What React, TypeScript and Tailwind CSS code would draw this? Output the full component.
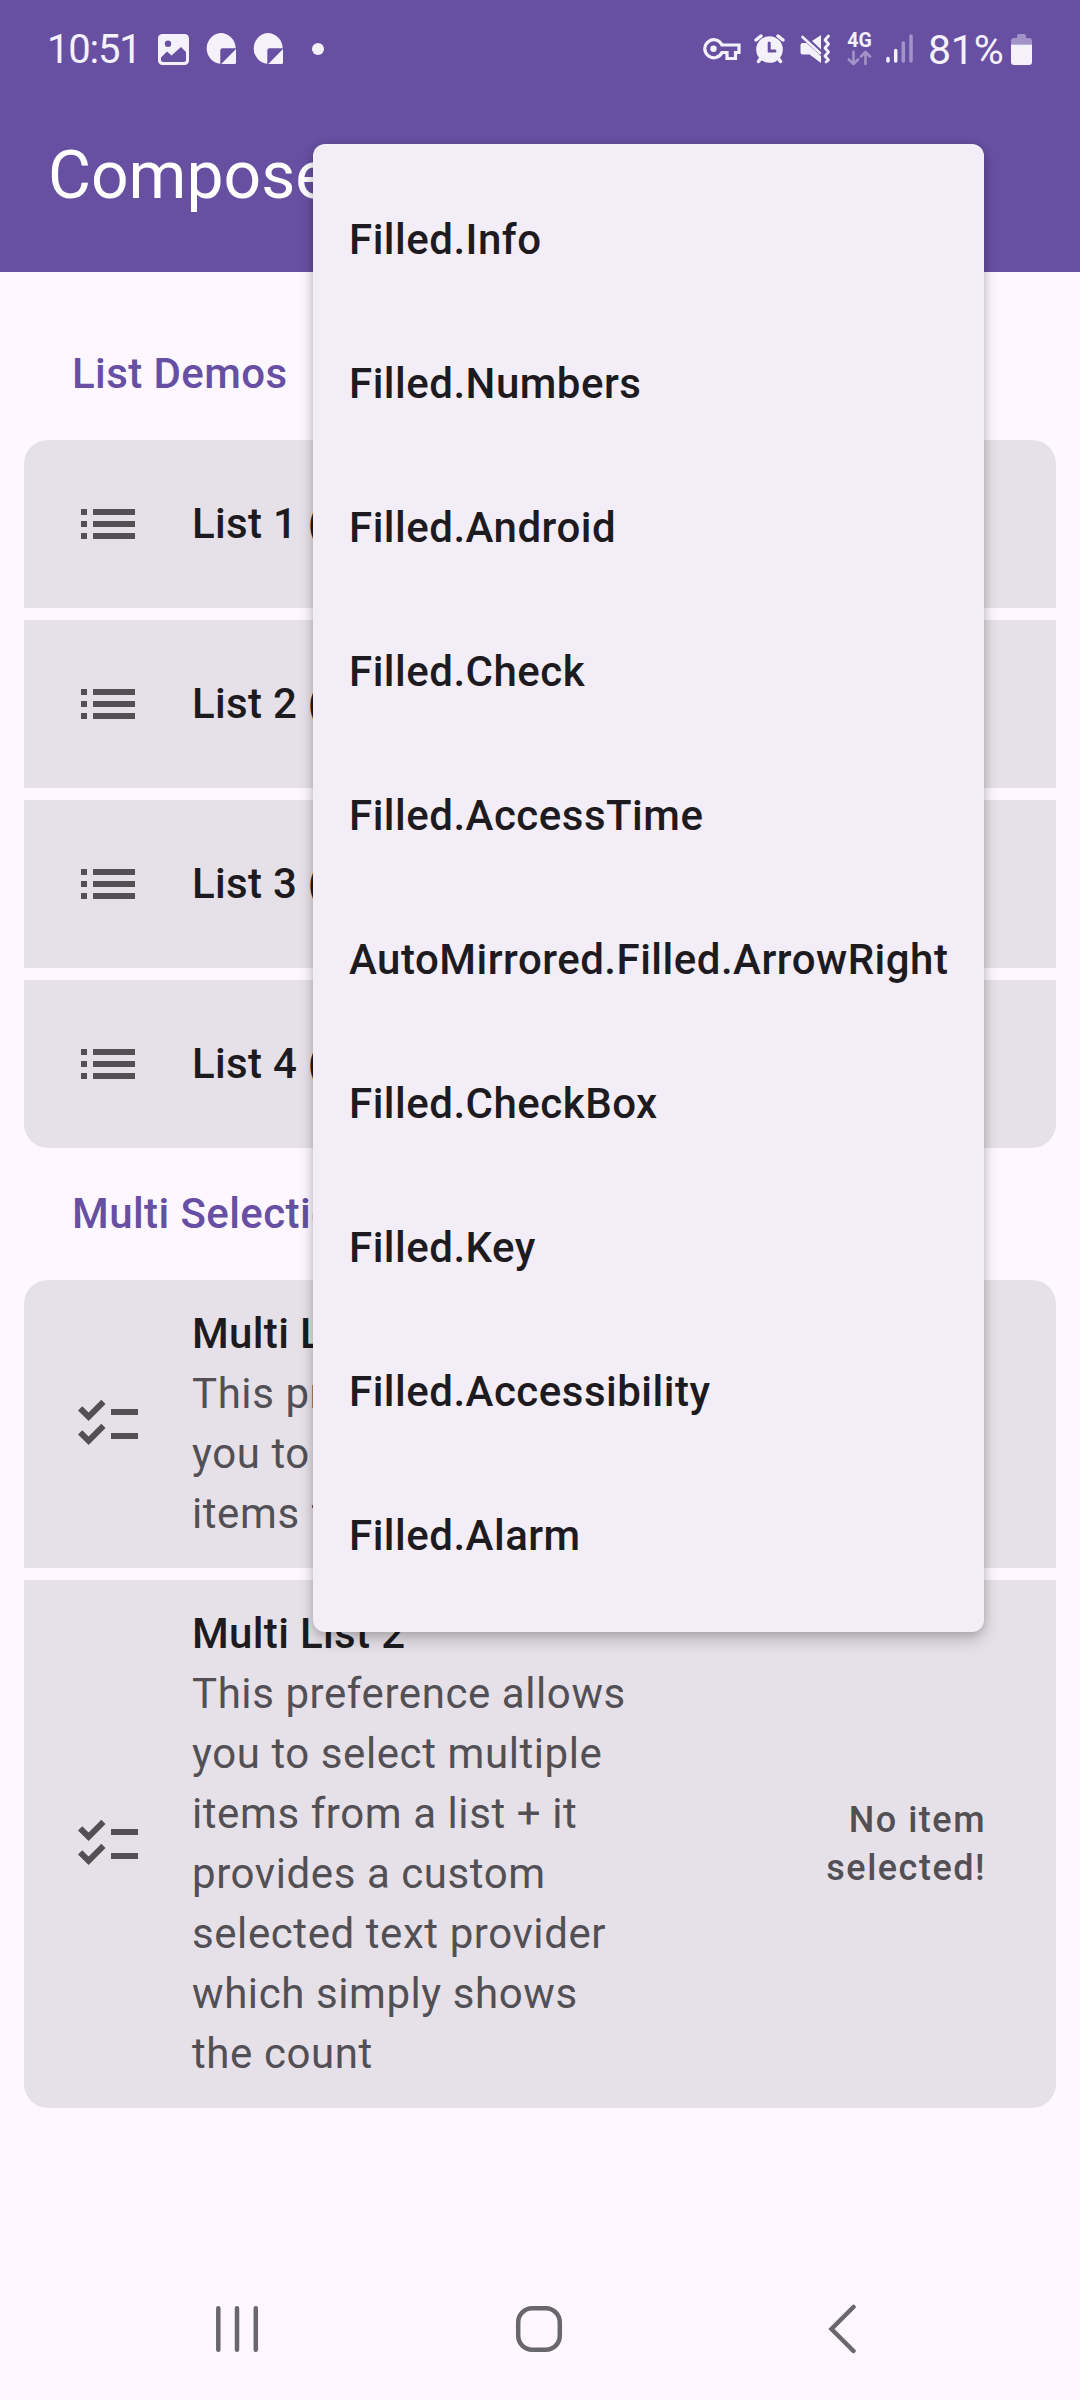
import type { ReactNode } from "react";

const menuItems = [
  "Filled.Info",
  "Filled.Numbers",
  "Filled.Android",
  "Filled.Check",
  "Filled.AccessTime",
  "AutoMirrored.Filled.ArrowRight",
  "Filled.CheckBox",
  "Filled.Key",
  "Filled.Accessibility",
  "Filled.Alarm",
];

const lists = ["List 1 (Dialog)", "List 2 (Dialog)", "List 3 (Menu)", "List 4 (Menu)"];

function NoteIcon() {
  return (
    <svg width="32" height="32" viewBox="0 0 32 32" fill="#f4f1fa">
      <path d="M15.500 0A15.500 15.500 0 0 1 30.700 15.200H17.500Q15.300 15.200 15.300 17.400V30.800A15.500 15.500 0 0 1 15.500 0Z" />
      <path d="M31 16V29.500Q31 31 29.500 31H16.200Z" />
    </svg>
  );
}

function StatusBar() {
  return (
    <div className="flex h-[98px] items-center text-[#f4f1fa]">
      <span className="ml-[47px] w-[111px] pt-[2px] text-[40px] leading-[48px] tracking-[-1.200px] whitespace-nowrap">10:51</span>
      <svg width="31" height="31" viewBox="0 0 31 31">
        <rect width="31" height="31" rx="4.500" fill="#f4f1fa" />
        <circle cx="10" cy="9.700" r="3.200" fill="#6750a2" />
        <path d="M3 23.500L9 17.500L13.500 21.500L23 13L28 18V25.500Q28 28 25.500 28H5.500Q3 28 3 25.500Z" fill="#6750a2" />
      </svg>
      <div className="ml-[16px] flex gap-[15px]">
        <NoteIcon />
        <NoteIcon />
      </div>
      <div className="ml-[28px] size-[12px] rounded-full bg-[#f4f1fa]" />
      <div className="flex-1" />
      <svg width="38" height="24" viewBox="0 -1.500 38 24">
        <path d="M19 6.500H36V14H32.500V20H24V14H19A9 9 0 1 1 19 6.500Z" fill="none" stroke="#f4f1fa" strokeWidth="3.200" />
        <circle cx="10.500" cy="10.300" r="3.200" fill="#f4f1fa" />
      </svg>
      <svg className="ml-[13px]" width="31" height="30" viewBox="0 0 31 30">
        <circle cx="15.500" cy="15.500" r="13.300" fill="#f4f1fa" />
        <path d="M2 6L7 2M29 6L24 2M7 24L4.500 27.500M24 24L26.500 27.500" stroke="#f4f1fa" strokeWidth="3.500" strokeLinecap="round" />
        <path d="M15.200 9V17H21" fill="none" stroke="#6750a2" strokeWidth="3" strokeLinecap="round" />
      </svg>
      <svg className="ml-[15px]" width="31" height="30" viewBox="0 0 31 30">
        <path d="M2.500 9H6.500L21 22V29L9.500 20.500H2.500Q.5 20.500 .5 18.500V11Q.5 9 2.500 9ZM12 7L21 1V15.500Z" fill="#f4f1fa" />
        <path d="M2.500 3L20 19" stroke="#f4f1fa" strokeWidth="2.600" strokeLinecap="round" />
        <path d="M28.500 2L25 6L28.500 10L25 14L28.500 18L25 22L28.500 26L26 28" fill="none" stroke="#f4f1fa" strokeWidth="2.800" strokeLinecap="round" strokeLinejoin="round" />
      </svg>
      <div className="ml-[15px] flex h-[34px] w-[27px] flex-col items-center">
        <span className="text-[19.500px] leading-[17px] font-bold">4G</span>
        <svg className="mt-[1px]" width="25" height="16" viewBox="0 0 25 16" fill="none" stroke="#a294c8" strokeWidth="2.600" strokeLinecap="round" strokeLinejoin="round">
          <path d="M6.500 1.500V14M1.800 9.500L6.500 14L11 9.500M18.500 14V2M14 6.500L18.500 2L23 6.500" />
        </svg>
      </div>
      <svg className="ml-[12px]" width="29" height="30" viewBox="0 0 29 30" strokeWidth="3.500" strokeLinecap="round">
        <path d="M3 24.500V27M10.700 16.500V27" stroke="#f4f1fa" />
        <path d="M18.300 9V27M26 2V27" stroke="#a294c8" />
      </svg>
      <span className="ml-[14px] w-[78px] pt-[2px] text-[41px] leading-[48px] tracking-[-0.200px] whitespace-nowrap">81%</span>
      <svg className="mr-[48px] ml-[5px]" width="21" height="31" viewBox="0 0 21 31">
        <path d="M6 2Q6 0 8 0H13Q15 0 15 2V4H18Q21 4 21 7V10.500H0V7Q0 4 3 4H6Z" fill="#a294c8" />
        <path d="M0 10.500H21V28Q21 31 18 31H3Q0 31 0 28Z" fill="#f4f1fa" />
      </svg>
    </div>
  );
}

function ListIcon() {
  return (
    <svg className="shrink-0" width="72" height="72" viewBox="0 0 24 24" fill="#525055">
      <path d="M3 13h2v-2H3v2zm0 4h2v-2H3v2zm0-8h2V7H3v2zm4 4h14v-2H7v2zm0 4h14v-2H7v2zM7 7v2h14V7H7z" />
    </svg>
  );
}

function ChecklistIcon() {
  return (
    <svg className="shrink-0" width="72" height="72" viewBox="0 0 24 24" fill="#525055">
      <path d="M22 7h-9v2h9V7zm0 8h-9v2h9v-2zM5.540 11L2 7.460l1.410-1.410 2.120 2.120 4.240-4.240 1.410 1.410L5.540 11zm0 8L2 15.460l1.410-1.410 2.120 2.120 4.240-4.240 1.410 1.410L5.540 19z" />
    </svg>
  );
}

function SectionTitle({ children }: { children: ReactNode }) {
  return (
    <h2 className="flex h-[132px] items-center px-[48px] text-[42px] leading-[60px] font-medium tracking-[0.420px] text-[#6750a4]">
      {children}
    </h2>
  );
}

function MultiItem({ title, text, value }: { title: string; text: string; value: string }) {
  return (
    <div className="flex items-center bg-[#e6e1e8] py-[24px] pr-[70px] pl-[48px]">
      <ChecklistIcon />
      <div className="ml-[48px] w-[445px] text-[42px] leading-[60px]">
        <div className="font-medium tracking-[0.350px] text-[#1d1b20]">{title}</div>
        <div className="tracking-[0.580px] text-[#525055]">{text}</div>
      </div>
      <div className="ml-auto w-[180px] text-right text-[36px] leading-[48px] font-medium tracking-[1.500px] text-[#525055]">
        {value}
      </div>
    </div>
  );
}

function DropdownMenu() {
  return (
    <div className="absolute top-[144px] left-[313px] w-[671px] rounded-[12px] bg-[#f3edf7] py-[24px] shadow-[0_8px_16px_rgba(0,0,0,0.2),0_1px_8px_rgba(0,0,0,0.14)]">
      {menuItems.map((item) => (
        <div
          key={item}
          className="flex h-[144px] items-center px-[36px] text-[42px] leading-[60px] font-medium tracking-[0.500px] whitespace-nowrap text-[#1d1b20]"
        >
          {item}
        </div>
      ))}
    </div>
  );
}

function NavigationBar() {
  return (
    <div className="flex h-[144px] items-center pt-[2px] text-[#69666c]">
      <svg className="ml-[213px]" width="48" height="48" viewBox="0 0 48 48" stroke="currentColor" strokeWidth="4.500" strokeLinecap="round">
        <path d="M5.300 3.300V44.700M24 3.300V44.700M42.800 3.300V44.700" />
      </svg>
      <svg className="ml-[254px]" width="48" height="48" viewBox="0 0 48 48" fill="none" stroke="currentColor" strokeWidth="4.500">
        <rect x="3.200" y="3.200" width="41.600" height="41.600" rx="14" />
      </svg>
      <svg className="ml-[262px]" width="32" height="50" viewBox="0 0 32 50" fill="none" stroke="currentColor" strokeWidth="4.500" strokeLinecap="round">
        <path d="M28.500 3L6.500 25L28.500 47" />
      </svg>
    </div>
  );
}

export default function App() {
  return (
    <div className="relative flex h-[2400px] w-[1080px] flex-col overflow-hidden bg-[#fef7ff] font-[Roboto,sans-serif]">
      <header className="h-[272px] bg-[#6750a2]">
        <StatusBar />
        <h1 className="px-[48px] pt-[36px] text-[66px] leading-[84px] text-white">Compose Preferences</h1>
      </header>
      <main className="flex-1 px-[24px] pt-[36px]">
        <SectionTitle>List Demos</SectionTitle>
        <div className="flex flex-col gap-[12px] overflow-hidden rounded-[24px]">
          {lists.map((title) => (
            <div key={title} className="flex h-[168px] items-center bg-[#e6e1e8] px-[48px]">
              <ListIcon />
              <div className="ml-[48px] text-[42px] leading-[60px] font-medium tracking-[0.300px] text-[#1d1b20]">{title}</div>
            </div>
          ))}
        </div>
        <SectionTitle>Multi Selection List Demos</SectionTitle>
        <div className="flex flex-col gap-[12px] overflow-hidden rounded-[24px]">
          <MultiItem title="Multi List 1" text="This preference allows you to select multiple items from a list" value="" />
          <MultiItem
            title="Multi List 2"
            text="This preference allows you to select multiple items from a list + it provides a custom selected text provider which simply shows the count"
            value="No item selected!"
          />
        </div>
      </main>
      <NavigationBar />
      <DropdownMenu />
    </div>
  );
}
